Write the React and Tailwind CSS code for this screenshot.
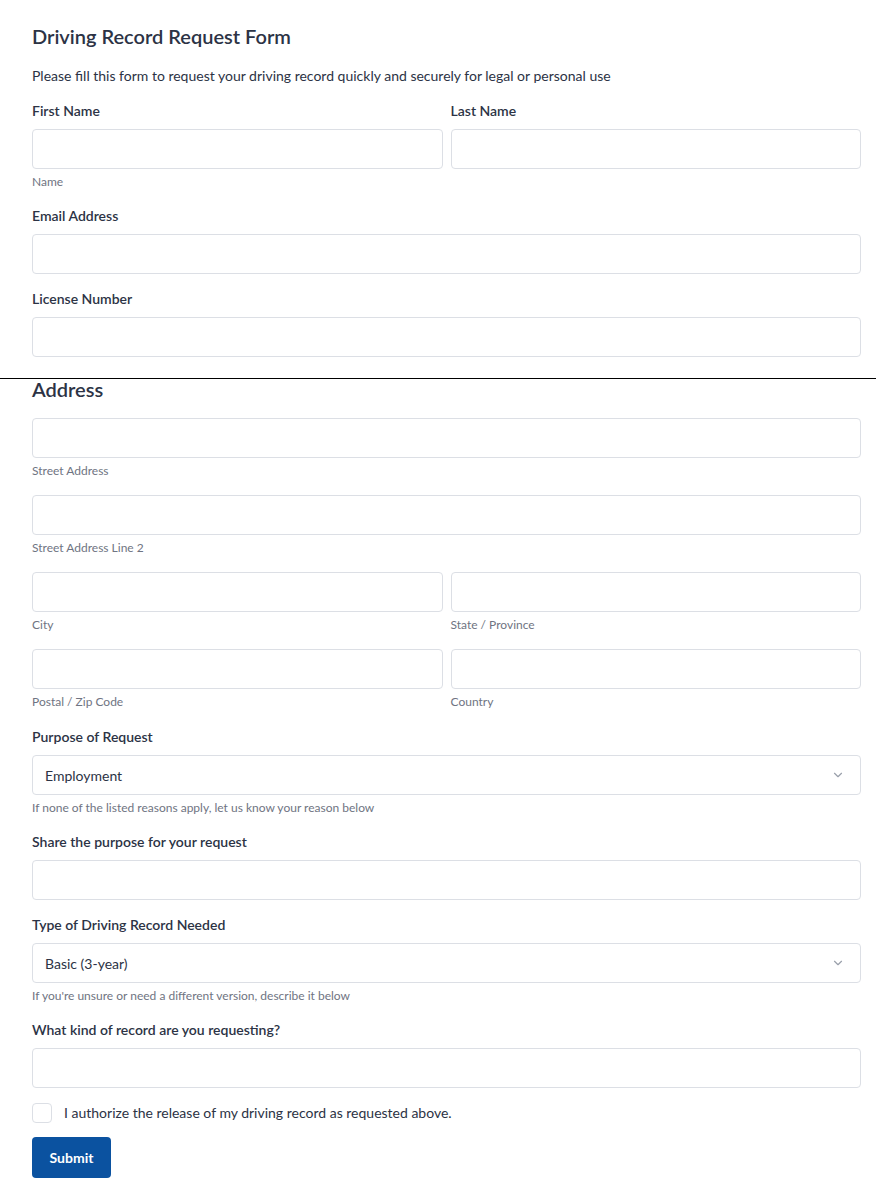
import React from "react";
import { ChevronDown } from "lucide-react";

const font = { fontFamily: "'Lato', 'Open Sans', sans-serif" };

const inputCls =
  "block w-full h-[40px] rounded-[4px] border border-[#dcdfe5] bg-white px-3 text-[14px] text-[#2c3345] outline-none";

const Label = ({ children, className = "" }) => (
  <label
    className={`block text-[14px] leading-[18px] font-semibold text-[#2c3345] mb-[9px] ${className}`}
  >
    {children}
  </label>
);

const Help = ({ children }) => (
  <p className="mt-[6px] text-[12px] leading-[14px] text-[#6f7482]">{children}</p>
);

const Select = ({ value }) => (
  <div className="relative">
    <select className={`${inputCls} appearance-none pl-[12px]`} defaultValue={value}>
      <option>{value}</option>
    </select>
    <ChevronDown
      className="absolute right-[16px] top-1/2 -translate-y-1/2 w-[14px] h-[14px] text-[#9aa0ab] pointer-events-none"
      strokeWidth={2}
    />
  </div>
);

export default function App() {
  return (
    <div className="bg-white min-h-screen" style={font}>
      <div className="pl-[32px] pr-[15px] pt-[23px]">
        <h1 className="text-[20px] leading-[26px] font-semibold text-[#2c3345]">
          Driving Record Request Form
        </h1>
        <p className="mt-[18px] text-[14px] leading-[18px] text-[#2c3345]">
          Please fill this form to request your driving record quickly and securely for legal or
          personal use
        </p>

        <div className="mt-[17px] grid grid-cols-2 gap-x-[8px]">
          <div>
            <Label>First Name</Label>
            <input className={inputCls} />
            <Help>Name</Help>
          </div>
          <div>
            <Label>Last Name</Label>
            <input className={inputCls} />
          </div>
        </div>

        <div className="mt-[18px]">
          <Label>Email Address</Label>
          <input className={inputCls} />
        </div>

        <div className="mt-[16px]">
          <Label>License Number</Label>
          <input className={inputCls} />
        </div>
      </div>

      <hr className="mt-[21px] border-0 border-t border-black" />

      <div className="pl-[32px] pr-[15px] pb-[24px]">
        <h2 className="text-[20px] leading-[20px] font-semibold text-[#2c3345]">Address</h2>

        <div className="mt-[19px]">
          <input className={inputCls} />
          <Help>Street Address</Help>
        </div>

        <div className="mt-[17px]">
          <input className={inputCls} />
          <Help>Street Address Line 2</Help>
        </div>

        <div className="mt-[17px] grid grid-cols-2 gap-x-[8px]">
          <div>
            <input className={inputCls} />
            <Help>City</Help>
          </div>
          <div>
            <input className={inputCls} />
            <Help>State / Province</Help>
          </div>
        </div>

        <div className="mt-[17px] grid grid-cols-2 gap-x-[8px]">
          <div>
            <input className={inputCls} />
            <Help>Postal / Zip Code</Help>
          </div>
          <div>
            <input className={inputCls} />
            <Help>Country</Help>
          </div>
        </div>

        <div className="mt-[19px]">
          <Label>Purpose of Request</Label>
          <Select value="Employment" />
          <Help>If none of the listed reasons apply, let us know your reason below</Help>
        </div>

        <div className="mt-[18px]">
          <Label>Share the purpose for your request</Label>
          <input className={inputCls} />
        </div>

        <div className="mt-[16px]">
          <Label>Type of Driving Record Needed</Label>
          <Select value="Basic (3-year)" />
          <Help>If you're unsure or need a different version, describe it below</Help>
        </div>

        <div className="mt-[18px]">
          <Label className="mb-[8px]">What kind of record are you requesting?</Label>
          <input className={inputCls} />
        </div>

        <label className="mt-[15px] flex items-center gap-[12px]">
          <span className="w-[20px] h-[20px] rounded-[4px] border border-[#dcdfe5] bg-white shrink-0" />
          <span className="text-[14px] leading-[18px] text-[#2c3345]">
            I authorize the release of my driving record as requested above.
          </span>
        </label>

        <button className="mt-[14px] h-[41px] w-[79px] rounded-[4px] bg-[#0b52a0] text-white text-[14px] font-bold">
          Submit
        </button>
      </div>
    </div>
  );
}
